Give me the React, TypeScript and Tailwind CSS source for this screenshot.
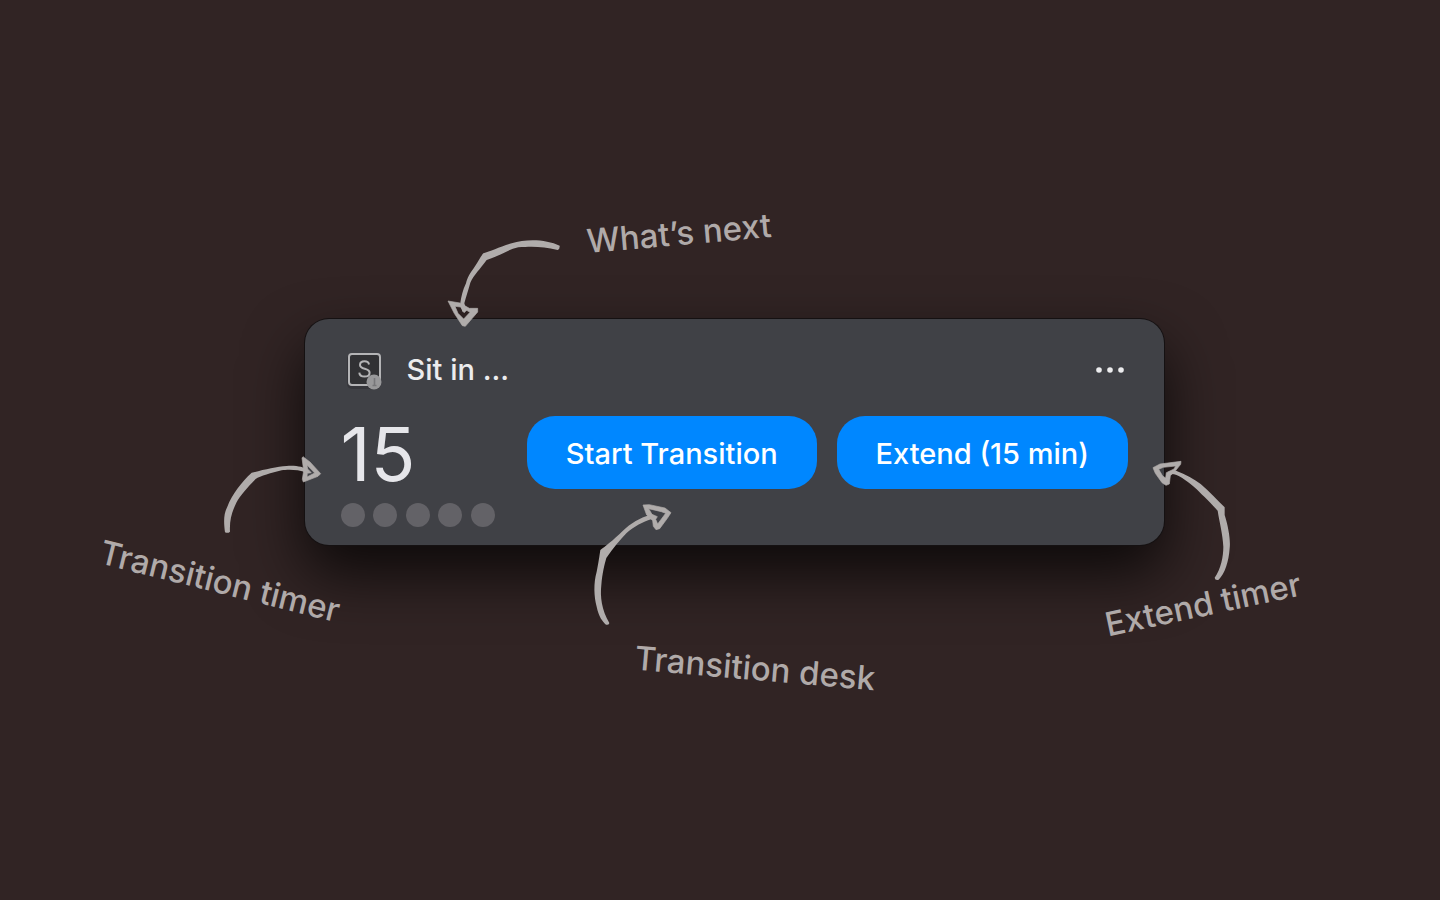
interface Annotation {
  id: string;
  label: string;
  labelClass: string;
  arrowClass: string;
  viewBox: string;
  shaft: string;
  head: string;
}

const annotations: Annotation[] = [
  {
    id: 'next',
    label: 'What’s next',
    labelClass: 'left-[374px] top-[-86px] -translate-x-1/2 -translate-y-1/2 rotate-[-5deg]',
    arrowClass: 'left-[141px] top-[-81px] w-[116px] h-[90px]',
    viewBox: '48 114 348 270',
    shaft:
      'M389 137C350 118 290 115 245 130C210 140 180 155 160 160C150 172 146 184 134 200C120 220 112 232 108 250C98 270 94 290 91 308L97 335L110 332L103 310C108 290 116 268 121 248C132 224 150 208 170 180C210 168 230 150 265 142C310 138 340 140 383 150Q390 148 389 137Z',
    head: 'M54 303L90 309L118 325L143 325L143 336L106 379L97 377Q70 340 54 303ZM75 319L84 340L101 357L120 337L110 331L102 338L92 321Z',
  },
  {
    id: 'timer',
    label: 'Transition timer',
    labelClass: 'left-[-85px] top-[262px] -translate-x-1/2 -translate-y-1/2 rotate-[14deg]',
    arrowClass: 'left-[-82px] top-[137px] w-[100px] h-[79px]',
    viewBox: '399 48 300 237',
    shaft:
      'M405 277C400 240 402 220 412 200C425 165 455 125 485 98C520 90 560 79 590 78C620 76 640 81 655 90L650 98C620 87 590 89 575 91C545 99 510 108 497 117C472 142 450 168 439 188C426 215 418 240 420 275Q414 281 405 277Z',
    head: 'M639 50L660 66L692 101L684 109L640 126L637 118L641 92L636 54ZM651 75L653 87L664 98L652 100L651 111L674 99Z',
  },
  {
    id: 'desk',
    label: 'Transition desk',
    labelClass: 'left-[450px] top-[349px] -translate-x-1/2 -translate-y-1/2 rotate-[5deg]',
    arrowClass: 'left-[288px] top-[185px] w-[79px] h-[122px]',
    viewBox: '39 42 237 366',
    shaft:
      'M88 399C65 360 60 320 64 285C67 250 73 225 79 204C100 174 120 150 139 130C162 110 190 95 213 88L228 82L208 76C182 83 152 100 128 123C98 152 75 170 61 180C58 200 56 215 50 245C40 280 42 320 50 350C56 380 68 395 78 404Q88 406 88 399Z',
    head: 'M189 45L208 44L255 54L273 68L262 85L239 116L228 119L220 109L218 92L200 75ZM206 56L216 73L232 80L227 88L233 102L257 70L244 65Z',
  },
  {
    id: 'extend',
    label: 'Extend timer',
    labelClass: 'left-[898px] top-[285px] -translate-x-1/2 -translate-y-1/2 rotate-[-12deg]',
    arrowClass: 'left-[847px] top-[141px] w-[79px] h-[122px]',
    viewBox: '216 60 237 366',
    shaft:
      'M404 413C423 385 430 350 430 320C428 280 418 245 413 212C398 195 370 168 350 148C325 126 302 108 282 103L266 101L265 95L288 92C318 103 343 118 362 132C388 155 412 180 434 202L434 225C445 260 452 300 449 325C446 365 435 400 416 419Q405 422 404 413Z',
    head: 'M219 83L240 72L303 64L302 73L285 94L271 107L268 132L258 136L246 128L226 100ZM236 88L248 108L257 114L259 98L282 87L287 78L250 82Z',
  },
];

const dots = [1, 2, 3, 4, 5];

function AppIcon() {
  return (
    <svg className="size-10" viewBox="0 0 40 40" aria-hidden="true">
      <rect x="3" y="4" width="34" height="35" rx="5" fill="#2c2c2f" opacity="0.5" />
      <rect x="5" y="4" width="31" height="31" rx="3" fill="#313134" stroke="#b4b4b6" strokeWidth="2" />
      <path
        d="M25 14.5C24.6 12.2 22.8 11.3 20.6 11.3C18 11.3 16 12.6 16 14.9C16 20 25.6 17.4 25.6 22.7C25.6 25.2 23.4 26.6 20.6 26.6C17.6 26.6 15.5 25.2 15.3 22.6"
        fill="none"
        stroke="#b4b4b6"
        strokeWidth="2"
      />
      <circle cx="30" cy="32" r="7.5" fill="#98989a" />
      <path d="M30.5 28V35.5M28.5 35.5H32.5" stroke="#77777a" strokeWidth="1.6" fill="none" />
    </svg>
  );
}

function ActionButton({ children }: { children: string }) {
  return (
    <button
      type="button"
      className="h-[73px] flex-1 rounded-[28px] bg-[#0087ff] pt-0.5 text-[29px] leading-none font-medium text-white whitespace-nowrap"
    >
      {children}
    </button>
  );
}

export default function App() {
  return (
    <main className="min-h-screen flex items-center justify-center bg-[#312424] pl-7 pb-9 overflow-hidden font-['Inter',sans-serif]">
      <section className="relative w-full max-w-[859px] rounded-[24px] bg-[#404146] px-9 pt-[31px] pb-[18px] shadow-[0_0_0_1px_#151112,0_28px_60px_rgba(0,0,0,0.75)]">
        {/* Header */}
        <header className="flex items-center justify-between h-10">
          <div className="flex items-center gap-[23px] pl-[3px]">
            <AppIcon />
            <h1 className="text-[29px] leading-10 font-medium text-[#ececee]">Sit in ...</h1>
          </div>
          <button type="button" aria-label="More" className="px-1">
            <svg className="w-7 h-6" viewBox="0 0 28 24" fill="#ececee" aria-hidden="true">
              <circle cx="3" cy="12" r="2.8" />
              <circle cx="14" cy="12" r="2.8" />
              <circle cx="25" cy="12" r="2.8" />
            </svg>
          </button>
        </header>

        {/* Timer and actions */}
        <div className="mt-[26px] flex gap-8">
          <div className="w-[154px] shrink-0">
            <div className="h-[73px] text-[74px] leading-[76px] text-[#e6e6ea]">15</div>
            <div className="mt-[14px] flex justify-between">
              {dots.map(dot => (
                <span key={dot} className="size-6 rounded-full bg-[#636267]" />
              ))}
            </div>
          </div>
          <div className="flex flex-1 items-start gap-5">
            <ActionButton>Start Transition</ActionButton>
            <ActionButton>Extend (15 min)</ActionButton>
          </div>
        </div>

        {/* Handwritten pointers around the card */}
        {annotations.map(item => (
          <div key={item.id}>
            <svg className={`absolute ${item.arrowClass}`} viewBox={item.viewBox} fill="#b0acab" aria-hidden="true">
              <path d={item.shaft} />
              <path d={item.head} fillRule="evenodd" stroke="#b0acab" strokeWidth="2" strokeLinejoin="round" />
            </svg>
            <p className={`absolute whitespace-nowrap text-[33px] leading-10 font-medium text-[#b0aaa9] ${item.labelClass}`}>
              {item.label}
            </p>
          </div>
        ))}
      </section>
    </main>
  );
}
